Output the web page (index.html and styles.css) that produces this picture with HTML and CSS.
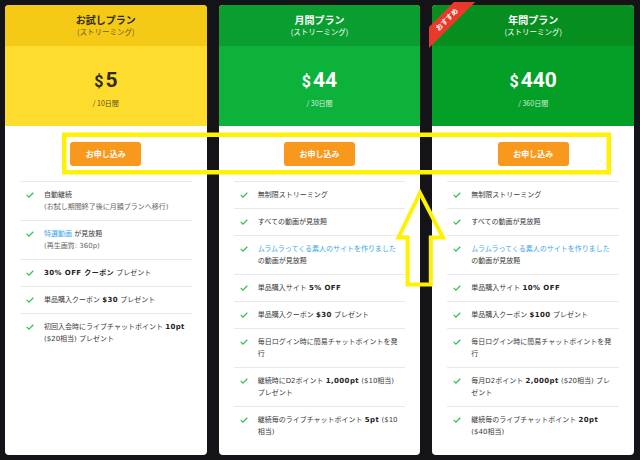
FILE: index.html
```html
<!DOCTYPE html>
<html lang="ja">
<head>
<meta charset="utf-8">
<title>Plans</title>
<link rel="stylesheet" href="styles.css">
</head>
<body>
<div class="plans">
  <section class="card card-trial">
    <header class="card-head">
      <h2 class="title">お試しプラン</h2>
      <p class="subtitle">(ストリーミング)</p>
    </header>
    <div class="price-box">
      <div class="price"><span class="cur">$</span>5</div>
      <div class="period">/ 10日間</div>
    </div>
    <div class="card-body">
      <a class="btn">お申し込み</a>
      <ul class="features">
        <li><svg class="chk" viewBox="0 0 8 6"><polyline points="0.7,2.9 2.9,5.1 7.3,0.8"/></svg><span class="txt">自動継続<span class="sub">(お試し期間終了後に月額プランへ移行)</span></span></li>
        <li><svg class="chk" viewBox="0 0 8 6"><polyline points="0.7,2.9 2.9,5.1 7.3,0.8"/></svg><span class="txt"><a class="lnk">特選動画</a> が見放題<span class="sub">(再生画質: 360p)</span></span></li>
        <li><svg class="chk" viewBox="0 0 8 6"><polyline points="0.7,2.9 2.9,5.1 7.3,0.8"/></svg><span class="txt"><b>30% OFF クーポン</b> プレゼント</span></li>
        <li><svg class="chk" viewBox="0 0 8 6"><polyline points="0.7,2.9 2.9,5.1 7.3,0.8"/></svg><span class="txt">単品購入クーポン <b>$30</b> プレゼント</span></li>
        <li><svg class="chk" viewBox="0 0 8 6"><polyline points="0.7,2.9 2.9,5.1 7.3,0.8"/></svg><span class="txt">初回入会時にライブチャットポイント <b>10pt</b> ($20相当) プレゼント</span></li>
      </ul>
    </div>
  </section>

  <section class="card card-month">
    <header class="card-head">
      <h2 class="title">月間プラン</h2>
      <p class="subtitle">(ストリーミング)</p>
    </header>
    <div class="price-box">
      <div class="price"><span class="cur">$</span>44</div>
      <div class="period">/ 30日間</div>
    </div>
    <div class="card-body">
      <a class="btn">お申し込み</a>
      <ul class="features">
        <li><svg class="chk" viewBox="0 0 8 6"><polyline points="0.7,2.9 2.9,5.1 7.3,0.8"/></svg><span class="txt">無制限ストリーミング</span></li>
        <li><svg class="chk" viewBox="0 0 8 6"><polyline points="0.7,2.9 2.9,5.1 7.3,0.8"/></svg><span class="txt">すべての動画が見放題</span></li>
        <li><svg class="chk" viewBox="0 0 8 6"><polyline points="0.7,2.9 2.9,5.1 7.3,0.8"/></svg><span class="txt"><a class="lnk">ムラムラってくる素人のサイトを作りました</a>の動画が見放題</span></li>
        <li><svg class="chk" viewBox="0 0 8 6"><polyline points="0.7,2.9 2.9,5.1 7.3,0.8"/></svg><span class="txt">単品購入サイト <b>5% OFF</b></span></li>
        <li><svg class="chk" viewBox="0 0 8 6"><polyline points="0.7,2.9 2.9,5.1 7.3,0.8"/></svg><span class="txt">単品購入クーポン <b>$30</b> プレゼント</span></li>
        <li><svg class="chk" viewBox="0 0 8 6"><polyline points="0.7,2.9 2.9,5.1 7.3,0.8"/></svg><span class="txt">毎日ログイン時に簡易チャットポイントを発行</span></li>
        <li><svg class="chk" viewBox="0 0 8 6"><polyline points="0.7,2.9 2.9,5.1 7.3,0.8"/></svg><span class="txt">継続時にD2ポイント <b>1,000pt</b> ($10相当) プレゼント</span></li>
        <li><svg class="chk" viewBox="0 0 8 6"><polyline points="0.7,2.9 2.9,5.1 7.3,0.8"/></svg><span class="txt">継続毎のライブチャットポイント <b>5pt</b> ($10相当)</span></li>
      </ul>
    </div>
  </section>

  <section class="card card-year">
    <div class="ribbon-wrap"><div class="ribbon">おすすめ</div></div>
    <header class="card-head">
      <h2 class="title">年間プラン</h2>
      <p class="subtitle">(ストリーミング)</p>
    </header>
    <div class="price-box">
      <div class="price"><span class="cur">$</span>440</div>
      <div class="period">/ 360日間</div>
    </div>
    <div class="card-body">
      <a class="btn">お申し込み</a>
      <ul class="features">
        <li><svg class="chk" viewBox="0 0 8 6"><polyline points="0.7,2.9 2.9,5.1 7.3,0.8"/></svg><span class="txt">無制限ストリーミング</span></li>
        <li><svg class="chk" viewBox="0 0 8 6"><polyline points="0.7,2.9 2.9,5.1 7.3,0.8"/></svg><span class="txt">すべての動画が見放題</span></li>
        <li><svg class="chk" viewBox="0 0 8 6"><polyline points="0.7,2.9 2.9,5.1 7.3,0.8"/></svg><span class="txt"><a class="lnk">ムラムラってくる素人のサイトを作りました</a>の動画が見放題</span></li>
        <li><svg class="chk" viewBox="0 0 8 6"><polyline points="0.7,2.9 2.9,5.1 7.3,0.8"/></svg><span class="txt">単品購入サイト <b>10% OFF</b></span></li>
        <li><svg class="chk" viewBox="0 0 8 6"><polyline points="0.7,2.9 2.9,5.1 7.3,0.8"/></svg><span class="txt">単品購入クーポン <b>$100</b> プレゼント</span></li>
        <li><svg class="chk" viewBox="0 0 8 6"><polyline points="0.7,2.9 2.9,5.1 7.3,0.8"/></svg><span class="txt">毎日ログイン時に簡易チャットポイントを発行</span></li>
        <li><svg class="chk" viewBox="0 0 8 6"><polyline points="0.7,2.9 2.9,5.1 7.3,0.8"/></svg><span class="txt">毎月D2ポイント <b>2,000pt</b> ($20相当) プレゼント</span></li>
        <li><svg class="chk" viewBox="0 0 8 6"><polyline points="0.7,2.9 2.9,5.1 7.3,0.8"/></svg><span class="txt">継続毎のライブチャットポイント <b>20pt</b> ($40相当)</span></li>
      </ul>
    </div>
  </section>
</div>

<svg class="annot" viewBox="0 0 640 460" width="640" height="460">
  <rect x="64.25" y="134.75" width="544.5" height="37.5" />
  <polygon points="420,193 443,237.5 430.8,237.5 430.8,284.5 407.6,284.5 407.6,237.5 398.5,237.5" />
</svg>
</body>
</html>
```

FILE: styles.css
```css
* { box-sizing: border-box; }

html, body {
  margin: 0;
  padding: 0;
  width: 640px;
  height: 460px;
  overflow: hidden;
  background: #141418;
}

body {
  font-family: "DejaVu Sans", "Noto Sans CJK JP", sans-serif;
  color: #333;
  position: relative;
}

.plans {
  display: grid;
  grid-template-columns: repeat(3, 1fr);
  column-gap: 12px;
  padding: 5px 6px 5px 5px;
  height: 460px;
}

.card {
  position: relative;
  background: #fff;
  border-radius: 4px;
  display: flex;
  flex-direction: column;
}

.card-head {
  height: 41px;
  padding-top: 8px;
  text-align: center;
  border-radius: 4px 4px 0 0;
  font-family: "Noto Sans CJK JP", sans-serif;
}

.title {
  margin: 0;
  font-size: 10px;
  line-height: 13px;
  font-weight: 700;
}

.subtitle {
  margin: 0;
  font-size: 7.5px;
  line-height: 11px;
}

.price-box {
  height: 80px;
  padding-top: 22px;
  text-align: center;
}

.price {
  font-family: Roboto, "Open Sans", sans-serif;
  font-weight: 700;
  font-size: 21px;
  line-height: 24px;
}

.cur {
  font-size: 16px;
  margin-right: 2px;
}

.period {
  margin-top: 4px;
  font-family: "Noto Sans CJK JP", sans-serif;
  font-size: 7px;
  line-height: 10px;
}

/* colour themes */
.card-trial .card-head { background: #f4ca16; color: #2f2a10; }
.card-trial .subtitle { color: #6b5c1c; }
.card-trial .price-box { background: #fedc2e; color: #2f2a10; }
.card-trial .period { color: #5a4d18; }

.card-month .card-head { background: #0a9e31; color: #fff; }
.card-month .price-box { background: #0cb23a; color: #fff; }
.card-month .period { color: #d6f3dc; }

.card-year .card-head { background: #068f1f; color: #fff; }
.card-year .price-box { background: #039f27; color: #fff; }
.card-year .period { color: #d3f0d8; }

.card-body {
  padding: 16px 15px 0;
  display: flex;
  flex-direction: column;
  align-items: center;
}

.btn {
  display: block;
  width: 71px;
  height: 24px;
  line-height: 24px;
  background: #f8991d;
  color: #fff;
  border-radius: 3px;
  text-align: center;
  font-family: "Noto Sans CJK JP", sans-serif;
  font-size: 8px;
  font-weight: 700;
  margin-bottom: 15px;
}

.features {
  list-style: none;
  margin: 0;
  padding: 0;
  width: 100%;
}

.features li {
  display: flex;
  align-items: flex-start;
  border-top: 1px solid #e9e9e9;
  padding: 7px 0;
  font-size: 7px;
  line-height: 12px;
  color: #3a3a3a;
}

.chk {
  flex: none;
  width: 8px;
  height: 6px;
  margin: 3px 10px 0 6px;
  fill: none;
  stroke: #2fbf50;
  stroke-width: 1.2;
}

.txt {
  flex: 1;
  padding-right: 6px;
}

.sub {
  display: block;
  color: #666;
}

.lnk {
  color: #3ea6e8;
}

.features b {
  font-weight: 700;
  color: #222;
  letter-spacing: 0.4px;
}

/* ribbon */
.ribbon-wrap {
  position: absolute;
  top: -3px;
  left: -3px;
  width: 50px;
  height: 50px;
  overflow: hidden;
  z-index: 2;
}

.ribbon {
  position: absolute;
  left: -17px;
  top: 10px;
  width: 70px;
  height: 15px;
  line-height: 15px;
  background: #e8392b;
  color: #fff;
  text-align: center;
  font-family: "Noto Sans CJK JP", sans-serif;
  font-size: 7px;
  font-weight: 700;
  transform: rotate(-45deg);
}

/* annotation overlay */
.annot {
  position: absolute;
  left: 0;
  top: 0;
  pointer-events: none;
}

.annot rect,
.annot polygon {
  fill: none;
  stroke: #fff200;
}

.annot rect { stroke-width: 4.5; }
.annot polygon { stroke-width: 4; stroke-linejoin: miter; }
```
